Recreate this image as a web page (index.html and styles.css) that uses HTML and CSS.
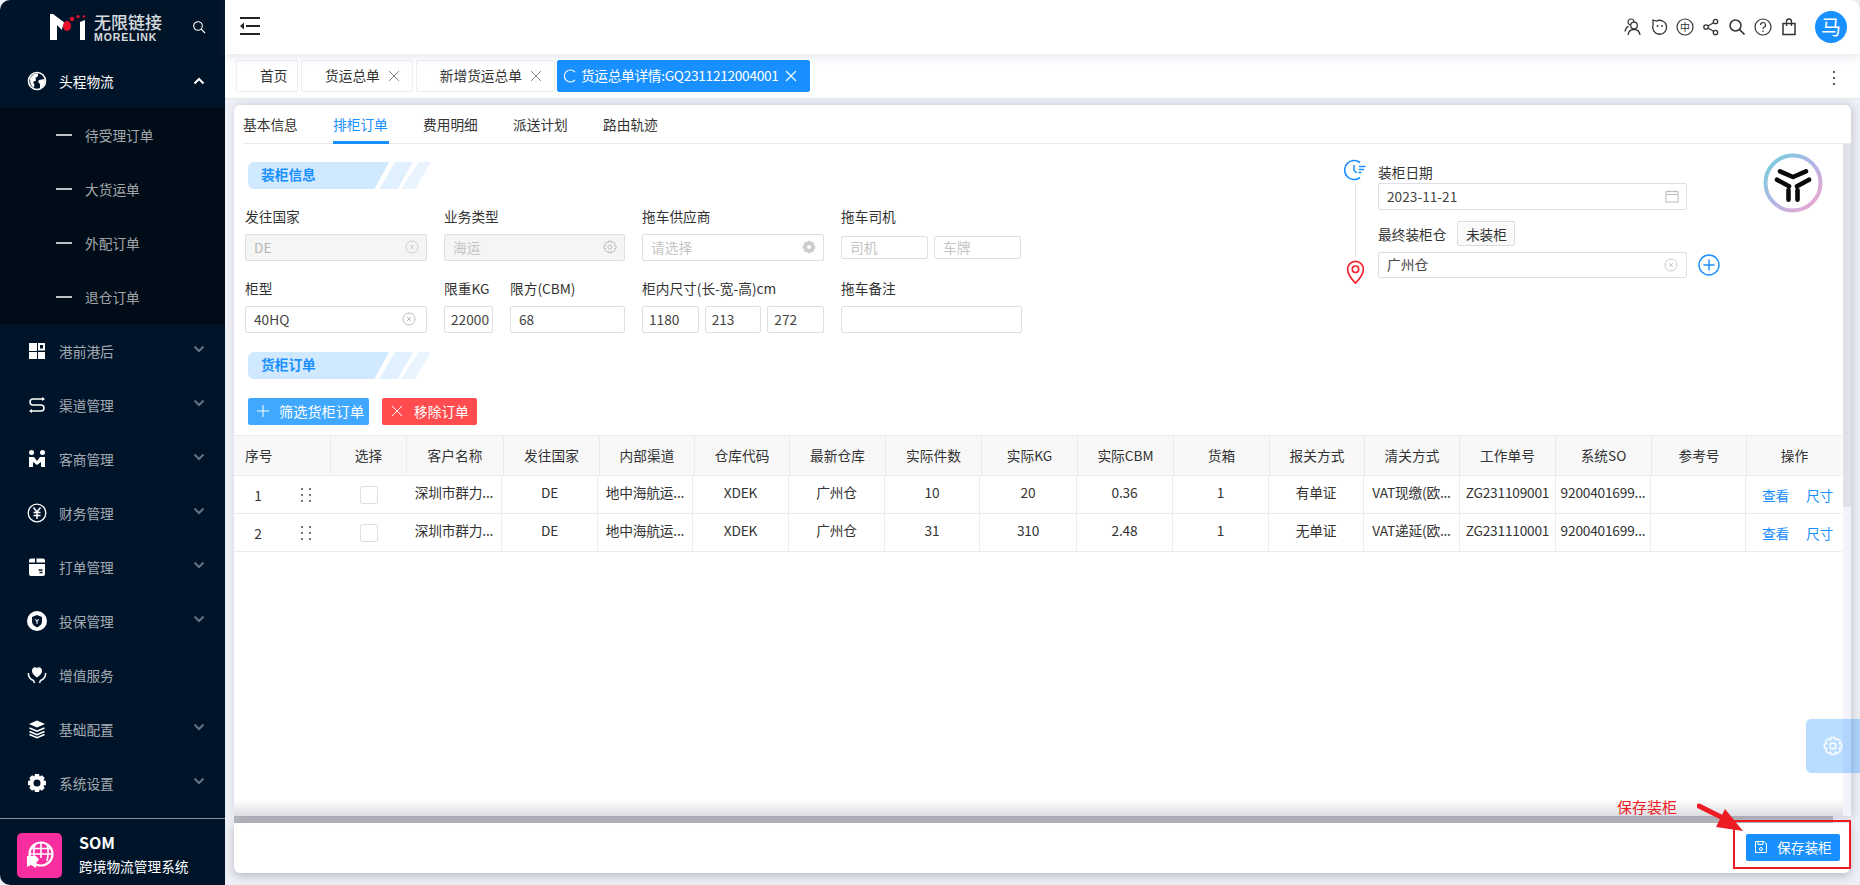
FILE: index.html
```html
<!DOCTYPE html>
<html lang="zh-CN">
<head>
<meta charset="utf-8">
<title>货运总单详情</title>
<link rel="stylesheet" href="styles.css">
</head>
<body>
<aside class="sidebar">
  <div class="brand">
    <svg class="brand-mark" viewBox="0 0 36 28" width="36" height="28"><path d="M0 1 L3 1 L15 10 C13 12 12 15 12 17 L7 12 L7 27 L0 27 Z" fill="#fff"/><ellipse cx="17" cy="13" rx="4" ry="5" fill="#e8112d"/><circle cx="22" cy="6" r="2.2" fill="#e8112d"/><circle cx="28" cy="3.5" r="1.6" fill="#e8112d"/><circle cx="34" cy="3.5" r="1.2" fill="#e8112d"/><path d="M30 9 L35 7 L35 27 L30 27 Z" fill="#fff"/></svg>
    <div class="brand-text"><div class="brand-cn">无限链接</div><div class="brand-en">MORELINK</div></div>
    <svg class="brand-search" viewBox="0 0 14 14" width="14" height="14"><circle cx="6" cy="6" r="4.3" fill="none" stroke="#fff" stroke-width="1.1"/><path d="M9.2 9.2 L13 13" stroke="#fff" stroke-width="1.2"/></svg>
  </div>
  <nav class="menu">
    <div class="menu-item active">
      <svg class="mi" viewBox="0 0 20 20"><circle cx="10" cy="10" r="8.5" fill="none" stroke="#fff" stroke-width="1.6"/><path d="M3 7 L7 3 L11 2.5 L11 5 L8.5 7 L9 9.5 L6 11 L7.5 14 L6.5 17 L3.5 13 Z M12 9 L17.5 8 L18 12 L14.5 17 L13 17 L13 13 L11 11 Z" fill="#fff"/></svg>
      <span class="ml">头程物流</span>
      <svg class="chev up" viewBox="0 0 12 8"><path d="M1.5 6.5 L6 2 L10.5 6.5" fill="none" stroke="#fff" stroke-width="2"/></svg>
    </div>
    <div class="submenu">
      <div class="sub-item"><i class="dash"></i><span>待受理订单</span></div>
      <div class="sub-item"><i class="dash"></i><span>大货运单</span></div>
      <div class="sub-item"><i class="dash"></i><span>外配订单</span></div>
      <div class="sub-item"><i class="dash"></i><span>退仓订单</span></div>
    </div>
    <div class="menu-item">
      <svg class="mi" viewBox="0 0 20 20"><path d="M2 2 H10 V10 H2 Z M2 11 H10 V18 H2 Z M11 11 H18 V18 H11 Z" fill="#fff"/><path d="M11 2 H18 V9.500 H11 Z M13 4 V7.500 H16 V4 Z" fill="#fff" fill-rule="evenodd"/></svg>
      <span class="ml">港前港后</span>
      <svg class="chev" viewBox="0 0 12 8"><path d="M1.500 1.500 L6 6 L10.500 1.500" fill="none" stroke="currentColor" stroke-width="2"/></svg>
    </div>
    <div class="menu-item">
      <svg class="mi" viewBox="0 0 20 20"><path d="M17 4 H6 A3 3 0 0 0 6 10 H14 A3 3 0 0 1 14 16 H3" fill="none" stroke="#fff" stroke-width="1.500"/><path d="M15 2 L18 4 L15 6 Z M5 14 L2 16 L5 18 Z" fill="#fff"/></svg>
      <span class="ml">渠道管理</span>
      <svg class="chev" viewBox="0 0 12 8"><path d="M1.500 1.500 L6 6 L10.500 1.500" fill="none" stroke="currentColor" stroke-width="2"/></svg>
    </div>
    <div class="menu-item">
      <svg class="mi" viewBox="0 0 20 20"><circle cx="4.500" cy="3.500" r="2.500" fill="#fff"/><circle cx="15.500" cy="3.500" r="2.500" fill="#fff"/><path d="M2 8 H7 L10 12 L13 8 H18 V18 H14 V13 L10 16 L6 13 V18 H2 Z" fill="#fff"/></svg>
      <span class="ml">客商管理</span>
      <svg class="chev" viewBox="0 0 12 8"><path d="M1.500 1.500 L6 6 L10.500 1.500" fill="none" stroke="currentColor" stroke-width="2"/></svg>
    </div>
    <div class="menu-item">
      <svg class="mi" viewBox="0 0 20 20"><circle cx="10" cy="10" r="8.800" fill="none" stroke="#fff" stroke-width="1.300"/><path d="M6.500 4.500 L10 9 L13.500 4.500 M10 9 V16 M6.500 9.500 H13.500 M6.500 12.500 H13.500" fill="none" stroke="#fff" stroke-width="1.500"/></svg>
      <span class="ml">财务管理</span>
      <svg class="chev" viewBox="0 0 12 8"><path d="M1.500 1.500 L6 6 L10.500 1.500" fill="none" stroke="currentColor" stroke-width="2"/></svg>
    </div>
    <div class="menu-item">
      <svg class="mi" viewBox="0 0 20 20"><path d="M4 1.500 H8 V5.500 H2 V3.500 A2 2 0 0 1 4 1.500 Z M9.500 1.500 H16 A2 2 0 0 1 18 3.500 V5.500 H9.500 Z M2 7 H18 V17 A2 2 0 0 1 16 19 H4 A2 2 0 0 1 2 17 Z" fill="#fff"/><path d="M11.500 13 H15.500 M12.500 15.500 H15.500" stroke="#001529" stroke-width="1.400"/></svg>
      <span class="ml">打单管理</span>
      <svg class="chev" viewBox="0 0 12 8"><path d="M1.500 1.500 L6 6 L10.500 1.500" fill="none" stroke="currentColor" stroke-width="2"/></svg>
    </div>
    <div class="menu-item">
      <svg class="mi" viewBox="0 0 20 20"><circle cx="10" cy="10" r="10" fill="#fff"/><path d="M10 4 L15 6 V10.500 C15 13 13 15 10 16.500 C7 15 5 13 5 10.500 V6 Z" fill="#001529"/><path d="M8.500 8 L10 11 L11.500 8 M10 11 V13" stroke="#fff" fill="none"/></svg>
      <span class="ml">投保管理</span>
      <svg class="chev" viewBox="0 0 12 8"><path d="M1.500 1.500 L6 6 L10.500 1.500" fill="none" stroke="currentColor" stroke-width="2"/></svg>
    </div>
    <div class="menu-item">
      <svg class="mi" viewBox="0 0 20 20"><path d="M10 12.500 C6 9.500 5 8 5 5.500 C5 3.500 6.500 2.200 8 2.200 C9 2.200 9.600 2.700 10 3.400 C10.400 2.700 11 2.200 12 2.200 C13.500 2.200 15 3.500 15 5.500 C15 8 14 9.500 10 12.500 Z" fill="#fff"/><path d="M1.500 8 C1 11.500 3 14 6.500 15.500 L7.500 18 M18.500 8 C19 11.500 17 14 13.500 15.500 L12.500 18" fill="none" stroke="#fff" stroke-width="1.500"/></svg>
      <span class="ml">增值服务</span>
    </div>
    <div class="menu-item">
      <svg class="mi" viewBox="0 0 20 20"><path d="M10 1.500 L18 5 L10 8.500 L2 5 Z" fill="#fff"/><path d="M2.500 9 L10 12.200 L17.500 9 M2.500 12.500 L10 15.700 L17.500 12.500 M2.500 15.500 L10 18.700 L17.500 15.500" fill="none" stroke="#fff" stroke-width="1.700"/></svg>
      <span class="ml">基础配置</span>
      <svg class="chev" viewBox="0 0 12 8"><path d="M1.500 1.500 L6 6 L10.500 1.500" fill="none" stroke="currentColor" stroke-width="2"/></svg>
    </div>
    <div class="menu-item">
      <svg class="mi" viewBox="0 0 20 20"><path fill-rule="evenodd" fill="#fff" d="M8 1 H12 L12.700 3.600 L14.900 2.300 L17.700 5.100 L16.400 7.300 L19 8 V12 L16.400 12.700 L17.700 14.900 L14.900 17.700 L12.700 16.400 L12 19 H8 L7.300 16.400 L5.100 17.700 L2.300 14.900 L3.600 12.700 L1 12 V8 L3.600 7.300 L2.300 5.100 L5.100 2.300 L7.300 3.600 Z M10 6.500 A3.500 3.500 0 1 0 10 13.500 A3.500 3.500 0 1 0 10 6.500 Z"/></svg>
      <span class="ml">系统设置</span>
      <svg class="chev" viewBox="0 0 12 8"><path d="M1.500 1.500 L6 6 L10.500 1.500" fill="none" stroke="currentColor" stroke-width="2"/></svg>
    </div>
  </nav>
  <div class="som">
    <div class="som-logo">
      <svg viewBox="0 0 30 30" width="30" height="30"><circle cx="16" cy="13" r="11.500" fill="none" stroke="#fff" stroke-width="2.200"/><path d="M4.500 13 H27.500 M6 7.500 H26 M16 1.500 V17 M10 3 C8.500 8 8.500 12 9.500 17 M22 3 C23.500 8 23.500 14 22 20" fill="none" stroke="#fff" stroke-width="1.600"/><path d="M2 15 H11 L14 18.500 L11 22 V27 L6 24 L2 26 Z" fill="#fff"/></svg>
    </div>
    <div class="som-text"><div class="som-title">SOM</div><div class="som-sub">跨境物流管理系统</div></div>
  </div>
</aside>

<main class="main">
  <header class="topbar">
    <svg class="fold" viewBox="0 0 20 18" width="20" height="18"><path d="M0 1 H20 M6 9 H20 M0 17 H20" stroke="#222" stroke-width="2"/><path d="M0 9 L4 5.500 V12.500 Z" fill="#222"/></svg>
    <div class="top-icons">
      <svg viewBox="0 0 18 18"><circle cx="7" cy="4" r="3" fill="none" stroke="#333" stroke-width="1.200"/><circle cx="10" cy="7.500" r="3.300" fill="#fff" stroke="#333" stroke-width="1.300"/><path d="M4 17 C4.500 13 6.500 11.500 10 11.500 C13.500 11.500 15.500 13 16 17 M1 13.500 C1.500 10.500 2.500 9 4.500 8" fill="none" stroke="#333" stroke-width="1.300"/></svg>
      <svg viewBox="0 0 18 18"><path d="M3 2 L6.500 3 A7 7 0 1 1 3 7 Z" fill="none" stroke="#333" stroke-width="1.300"/><circle cx="7.500" cy="8" r=".9" fill="#333"/><circle cx="12" cy="8" r=".9" fill="#333"/></svg>
      <svg viewBox="0 0 18 18"><circle cx="9" cy="9" r="8" fill="none" stroke="#333" stroke-width="1.200"/><text x="9" y="12.800" text-anchor="middle" class="top-glyph">中</text></svg>
      <svg viewBox="0 0 18 18"><circle cx="13.500" cy="3.500" r="2.200" fill="none" stroke="#333" stroke-width="1.300"/><circle cx="4" cy="9" r="2.200" fill="none" stroke="#333" stroke-width="1.300"/><circle cx="13.500" cy="14.500" r="2.200" fill="none" stroke="#333" stroke-width="1.300"/><path d="M6 8 L11.500 4.700 M6 10 L11.500 13.300" stroke="#333" stroke-width="1.300"/></svg>
      <svg viewBox="0 0 18 18"><circle cx="7.500" cy="7.500" r="5.500" fill="none" stroke="#333" stroke-width="1.500"/><path d="M11.500 11.500 L16.500 16.500" stroke="#333" stroke-width="1.700"/></svg>
      <svg viewBox="0 0 18 18"><circle cx="9" cy="9" r="8" fill="none" stroke="#333" stroke-width="1.200"/><path d="M6.500 7 A2.500 2.500 0 1 1 10 9.300 C9.200 9.700 9 10.200 9 11.200" fill="none" stroke="#333" stroke-width="1.200"/><circle cx="9" cy="13.300" r=".8" fill="#333"/></svg>
      <svg viewBox="0 0 18 18"><path d="M3 5.500 H15 V16.500 H3 Z" fill="none" stroke="#333" stroke-width="1.500"/><path d="M6.500 8 V3.500 A2.500 2.500 0 0 1 11.500 3.500 V8" fill="none" stroke="#333" stroke-width="1.300"/></svg>
    </div>
    <div class="avatar">马</div>
  </header>

  <div class="tabbar">
    <div class="tab tab-home">首页</div>
    <div class="tab">货运总单<svg class="x" viewBox="0 0 12 12"><path d="M1 1 L11 11 M11 1 L1 11" stroke="#888" stroke-width="1"/></svg></div>
    <div class="tab">新增货运总单<svg class="x" viewBox="0 0 12 12"><path d="M1 1 L11 11 M11 1 L1 11" stroke="#888" stroke-width="1"/></svg></div>
    <div class="tab tab-active">
      <svg class="spin" viewBox="0 0 14 14"><path d="M12 3.200 A6 6 0 1 0 12 10.800" fill="none" stroke="#fff" stroke-width="1.200"/></svg>
      <span class="tab-title">货运总单详情:GQ2311212004001</span>
      <svg class="x x-active" viewBox="0 0 12 12"><path d="M1 1 L11 11 M11 1 L1 11" stroke="#fff" stroke-width="1.100"/></svg>
    </div>
    <svg class="kebab" viewBox="0 0 4 16" width="4" height="16"><circle cx="2" cy="2" r="1.100" fill="#333"/><circle cx="2" cy="8" r="1.100" fill="#333"/><circle cx="2" cy="14" r="1.100" fill="#333"/></svg>
  </div>

  <section class="card">
    <div class="card-tabs">
      <div class="ctab">基本信息</div>
      <div class="ctab on">排柜订单</div>
      <div class="ctab">费用明细</div>
      <div class="ctab">派送计划</div>
      <div class="ctab">路由轨迹</div>
    </div>
    <div class="card-body">
      <div class="card-main">
        <div class="upper">
          <div class="form">
            <div class="sec">
              <svg viewBox="0 0 183 27" width="183" height="27"><path d="M6 0 H141 L126.500 27 H6 A6 6 0 0 1 0 21 V6 A6 6 0 0 1 6 0 Z" fill="#d1e9ff"/><path d="M147 0 H165 L149.500 27 H131.500 Z" fill="#e0f0ff"/><path d="M171 0 H183 L167 27 H153 Z" fill="#e9f4ff"/></svg>
              <span>装柜信息</span>
            </div>
            <div class="frow">
              <div class="f w182"><label>发往国家</label><div class="inp dis">DE<svg class="clear" viewBox="0 0 14 14"><circle cx="7" cy="7" r="6" fill="none" stroke="#ccc"/><path d="M5 5 L9 9 M9 5 L5 9" stroke="#ccc"/></svg></div></div>
              <div class="f w181"><label>业务类型</label><div class="inp dis ph">海运<svg class="clear" viewBox="0 0 20 20"><path fill="none" stroke="#bbb" stroke-width="1.400" d="M8 1.500 H12 L12.600 4 L14.800 2.800 L17.500 5.500 L16.200 7.600 L18.700 8.300 V11.700 L16.200 12.400 L17.500 14.500 L14.800 17.200 L12.600 16 L12 18.500 H8 L7.400 16 L5.200 17.200 L2.500 14.500 L3.800 12.400 L1.300 11.700 V8.300 L3.800 7.600 L2.500 5.500 L5.200 2.800 L7.400 4 Z"/><circle cx="10" cy="10" r="3" fill="none" stroke="#bbb" stroke-width="1.400"/></svg></div></div>
              <div class="f w182"><label>拖车供应商</label><div class="inp ph">请选择<svg class="clear" viewBox="0 0 20 20"><path fill-rule="evenodd" fill="#ccc" d="M8 1 H12 L12.700 3.600 L14.900 2.300 L17.700 5.100 L16.400 7.300 L19 8 V12 L16.400 12.700 L17.700 14.900 L14.900 17.700 L12.700 16.400 L12 19 H8 L7.300 16.400 L5.100 17.700 L2.300 14.900 L3.600 12.700 L1 12 V8 L3.600 7.300 L2.300 5.100 L5.100 2.300 L7.300 3.600 Z M10 7 A3 3 0 1 0 10 13 A3 3 0 1 0 10 7 Z"/></svg></div></div>
              <div class="f w181"><label>拖车司机</label><div class="pair"><div class="inp sm ph">司机</div><div class="inp sm ph">车牌</div></div></div>
            </div>
            <div class="frow">
              <div class="f w182"><label>柜型</label><div class="inp">40HQ<svg class="clear c2" viewBox="0 0 14 14"><circle cx="7" cy="7" r="6" fill="none" stroke="#bbb"/><path d="M5 5 L9 9 M9 5 L5 9" stroke="#bbb"/></svg></div></div>
              <div class="f w49"><label>限重KG</label><div class="inp tight">22000</div></div>
              <div class="f w115"><label>限方(CBM)</label><div class="inp">68</div></div>
              <div class="f w182"><label>柜内尺寸(长-宽-高)cm</label><div class="triple"><div class="inp tight2">1180</div><div class="inp tight2">213</div><div class="inp tight2">272</div></div></div>
              <div class="f w181"><label>拖车备注</label><div class="inp"></div></div>
            </div>
          </div>
          <div class="panel">
            <div class="timeline">
              <svg class="clock" viewBox="0 0 22 22" width="22" height="22"><path d="M16 3.500 A9.500 9.500 0 1 0 16 18.500" fill="none" stroke="#1890ff" stroke-width="1.600"/><path d="M10 6 V11.500 L13 14" fill="none" stroke="#1890ff" stroke-width="1.500"/><path d="M15 7.500 H21.500 M15 10.500 H20 M14.500 13.500 H17.500" stroke="#1890ff" stroke-width="1.300"/></svg>
              <i class="tl-line"></i>
              <svg class="pin" viewBox="0 0 20 26" width="20" height="26"><path d="M10 25 C4 19 1.500 15 1.500 10 A8.500 8.500 0 0 1 18.500 10 C18.500 15 16 19 10 25 Z" fill="none" stroke="#f5222d" stroke-width="1.800"/><circle cx="10" cy="10" r="3.500" fill="none" stroke="#f5222d" stroke-width="1.800"/></svg>
            </div>
            <div class="pfields">
              <label class="plabel">装柜日期</label>
              <div class="inp pinp">2023-11-21<svg class="clear cal" viewBox="0 0 14 14"><rect x="1" y="2.500" width="12" height="10.500" fill="none" stroke="#bbb"/><path d="M1 5.500 H13 M4 1 V3.500 M10 1 V3.500" stroke="#bbb"/></svg></div>
              <div class="prow"><label>最终装柜仓</label><div class="badge">未装柜</div></div>
              <div class="pline">
                <div class="inp pinp">广州仓<svg class="clear c3" viewBox="0 0 14 14"><circle cx="7" cy="7" r="6" fill="none" stroke="#ccc"/><path d="M5 5 L9 9 M9 5 L5 9" stroke="#ccc"/></svg></div>
                <svg class="plus" viewBox="0 0 22 22" width="22" height="22"><circle cx="11" cy="11" r="10" fill="none" stroke="#1890ff" stroke-width="1.400"/><path d="M5.500 11 H16.500 M11 5.500 V16.500" stroke="#1890ff" stroke-width="1.400"/></svg>
              </div>
            </div>
            <svg class="ylogo" viewBox="0 0 60 60" width="60" height="60"><defs><linearGradient id="ring" x1="0" y1="0" x2="1" y2="1"><stop offset="0" stop-color="#6fd0dc"/><stop offset=".55" stop-color="#b9b4e6"/><stop offset="1" stop-color="#f3a4c6"/></linearGradient></defs><circle cx="30" cy="30" r="27.500" fill="none" stroke="url(#ring)" stroke-width="4"/><path d="M17 18.300 L30 24 L43 18.300 M14 26.700 L26 33.300 M46 26.700 L34 33.300 M25.500 37 V46.700 M34.500 37 V46.700" fill="none" stroke="#0a0a0a" stroke-width="4.600" stroke-linecap="round" stroke-linejoin="round"/></svg>
          </div>
        </div>
        <div class="sec sec2">
          <svg viewBox="0 0 183 27" width="183" height="27"><path d="M6 0 H141 L126.500 27 H6 A6 6 0 0 1 0 21 V6 A6 6 0 0 1 6 0 Z" fill="#d1e9ff"/><path d="M147 0 H165 L149.500 27 H131.500 Z" fill="#e0f0ff"/><path d="M171 0 H183 L167 27 H153 Z" fill="#e9f4ff"/></svg>
          <span>货柜订单</span>
        </div>
        <div class="btns">
          <button class="btn btn-blue"><svg viewBox="0 0 12 12" width="12" height="12"><path d="M6 0 V12 M0 6 H12" stroke="#fff" stroke-width="1"/></svg>筛选货柜订单</button>
          <button class="btn btn-red"><svg viewBox="0 0 12 12" width="12" height="12"><path d="M1 1 L11 11 M11 1 L1 11" stroke="#fff" stroke-width="1"/></svg>移除订单</button>
        </div>
        <div class="table">
          <div class="thead">
            <div class="th left">序号</div><div class="th">选择</div><div class="th">客户名称</div><div class="th">发往国家</div><div class="th">内部渠道</div><div class="th">仓库代码</div><div class="th">最新仓库</div><div class="th">实际件数</div><div class="th">实际KG</div><div class="th">实际CBM</div><div class="th">货箱</div><div class="th">报关方式</div><div class="th">清关方式</div><div class="th">工作单号</div><div class="th">系统SO</div><div class="th">参考号</div><div class="th">操作</div>
          </div>
          <div class="trow">
            <div class="td first"><span class="num">1</span><svg class="drag" viewBox="0 0 12 16" width="12" height="16"><g fill="#444"><circle cx="2" cy="2" r="1"/><circle cx="10" cy="2" r="1"/><circle cx="2" cy="8" r="1"/><circle cx="10" cy="8" r="1"/><circle cx="2" cy="14" r="1"/><circle cx="10" cy="14" r="1"/></g></svg></div>
            <div class="td check"><i class="box"></i></div>
            <div class="td">深圳市群力...</div><div class="td">DE</div><div class="td">地中海航运...</div><div class="td">XDEK</div><div class="td">广州仓</div><div class="td">10</div><div class="td">20</div><div class="td">0.36</div><div class="td">1</div><div class="td">有单证</div><div class="td">VAT现缴(欧...</div><div class="td">ZG231109001</div><div class="td">9200401699...</div><div class="td"></div>
            <div class="td ops"><a>查看</a><a>尺寸</a></div>
          </div>
          <div class="trow">
            <div class="td first"><span class="num">2</span><svg class="drag" viewBox="0 0 12 16" width="12" height="16"><g fill="#444"><circle cx="2" cy="2" r="1"/><circle cx="10" cy="2" r="1"/><circle cx="2" cy="8" r="1"/><circle cx="10" cy="8" r="1"/><circle cx="2" cy="14" r="1"/><circle cx="10" cy="14" r="1"/></g></svg></div>
            <div class="td check"><i class="box"></i></div>
            <div class="td">深圳市群力...</div><div class="td">DE</div><div class="td">地中海航运...</div><div class="td">XDEK</div><div class="td">广州仓</div><div class="td">31</div><div class="td">310</div><div class="td">2.48</div><div class="td">1</div><div class="td">无单证</div><div class="td">VAT递延(欧...</div><div class="td">ZG231110001</div><div class="td">9200401699...</div><div class="td"></div>
            <div class="td ops"><a>查看</a><a>尺寸</a></div>
          </div>
        </div>
        <div class="fade"></div>
      </div>
      <div class="vscroll"><i></i></div>
    </div>
  </section>

  <div class="greybar"></div>
  <footer class="savebar">
    <button class="btn btn-save"><svg viewBox="0 0 14 14" width="14" height="14"><path d="M1.500 1.500 H10 L12.500 4 V12.500 H1.500 Z" fill="none" stroke="#fff"/><path d="M4 1.500 V4.500 H9 V1.500" fill="none" stroke="#fff"/><circle cx="7" cy="9" r="1.500" fill="none" stroke="#fff"/></svg>保存装柜</button>
  </footer>
</main>

<div class="float-gear"><svg viewBox="0 0 20 20" width="20" height="20"><path fill="none" stroke="#fff" stroke-width="1.300" d="M8 1.500 H12 L12.600 4 L14.800 2.800 L17.500 5.500 L16.200 7.600 L18.700 8.300 V11.700 L16.200 12.400 L17.500 14.500 L14.800 17.200 L12.600 16 L12 18.500 H8 L7.400 16 L5.200 17.200 L2.500 14.500 L3.800 12.400 L1.300 11.700 V8.300 L3.800 7.600 L2.500 5.500 L5.200 2.800 L7.400 4 Z"/><circle cx="10" cy="10" r="3" fill="none" stroke="#fff" stroke-width="1.300"/></svg></div>
<div class="note">保存装柜</div>
<svg class="note-arrow" viewBox="0 0 48 30" width="48" height="30"><path d="M2 3 L30 17" stroke="#ed1c24" stroke-width="5" stroke-linecap="round"/><path d="M28 6 L46 28 L19 24 Z" fill="#ed1c24"/></svg>
<div class="note-box"></div>
</body>
</html>
```
FILE: styles.css
```css
* { box-sizing: border-box; }
html, body { margin: 0; padding: 0; height: 885px; overflow: hidden; }
body {
  display: flex;
  width: 1860px;
  background: #eef0f7;
  font-family: "Noto Sans CJK SC", "Noto Sans", sans-serif;
  font-size: 13.7px;
  line-height: 20px;
  color: #333;
}
label { display: block; color: #333; }

/* sidebar */
.sidebar {
  width: 225px;
  height: 885px;
  flex: none;
  display: flex;
  flex-direction: column;
  background: #001429;
  border-radius: 10px 0 0 10px;
  overflow: hidden;
  color: rgba(255, 255, 255, .65);
}
.brand { height: 54px; display: flex; align-items: center; padding-left: 50px; }
.brand-mark { flex: none; }
.brand-text { margin-left: 8px; color: #fff; opacity: .85; width: 70px; }
.brand-cn { font-size: 17px; line-height: 19px; font-weight: 500; }
.brand-en { font-size: 10.500px; line-height: 11px; margin-top: 1px; font-weight: 700; letter-spacing: .9px; font-family: "Liberation Sans", sans-serif; }
.brand-search { margin-left: 28px; flex: none; }
.menu { flex: 1; }
.menu-item { height: 54px; display: flex; align-items: center; padding: 0 20px 0 27px; }
.mi { width: 20px; height: 20px; flex: none; margin-right: 12px; }
.ml { flex: 1; }
.menu-item.active { color: #fff; }
.chev { width: 12px; height: 8px; flex: none; color: rgba(255, 255, 255, .4); margin-top: -4px; }
.chev.up { margin-top: 0; }
.submenu { background: #000c17; height: 216px; }
.sub-item { height: 54px; display: flex; align-items: center; padding-left: 56px; }
.dash { width: 16px; height: 2px; background: rgba(255, 255, 255, .75); margin-right: 13px; }
.som { height: 67px; border-top: 1px solid #8c8f94; display: flex; padding: 14px 0 0 17px; }
.som-logo { width: 45px; height: 45px; background: #f72e9f; border-radius: 5px; display: flex; align-items: center; justify-content: center; }
.som-text { margin-left: 17px; color: #fff; margin-top: -3px; }
.som-title { font-size: 16px; font-weight: 700; line-height: 24px; }
.som-sub { line-height: 24px; }

/* main */
.main { flex: 1; display: flex; flex-direction: column; min-width: 0; height: 885px; }
.topbar {
  height: 54px;
  flex: none;
  background: #fff;
  display: flex;
  align-items: center;
  padding: 0 13px 0 15px;
  border-radius: 0 10px 0 0;
  box-shadow: 0 2px 10px rgba(90, 95, 150, .18);
  position: relative;
}
.fold { margin-top: -3px; }
.top-icons { margin-left: auto; display: flex; gap: 8px; }
.top-icons svg { width: 18px; height: 18px; }
.top-glyph { font-size: 10px; fill: #333; }
.avatar {
  width: 32px; height: 32px; border-radius: 50%;
  background: #1890ff; color: #fff; font-size: 20px;
  display: flex; align-items: center; justify-content: center;
  margin-left: 17px;
}
.tabbar {
  height: 45px;
  flex: none;
  background: #fff;
  border-bottom: 1px solid #e6e8f0;
  display: flex;
  align-items: flex-start;
  gap: 3px;
  padding: 6px 0 0 11px;
}
.tab {
  height: 32px;
  display: flex;
  align-items: center;
  border: 1px solid #eee;
  border-radius: 2px;
  padding: 0 12px 2px 23px;
  color: #333;
  background: #fff;
  white-space: nowrap;
}
.tab-home { width: 62px; padding: 0 0 2px 23px; }
.x { width: 12px; height: 12px; margin-left: 8px; margin-top: 2px; }
.tab-active { background: #1890ff; border-color: #1890ff; color: #fff; padding: 0 12px 2px 5px; margin-left: -1px; }
.tab-title { letter-spacing: -.3px; }
.spin { width: 14px; height: 14px; margin: 2px 4px 0 0; }
.x-active { margin-left: 6px; }
.kebab { margin: 10px 24px 0 auto; }

.card {
  height: 711px;
  flex: none;
  margin: 6px 9px 0 9px;
  background: #fff;
  border-radius: 6px 6px 0 0;
  box-shadow: 2px 0 8px rgba(60, 60, 80, .22);
  display: flex;
  flex-direction: column;
  position: relative;
}
.card-tabs { height: 39px; flex: none; border-bottom: 1px solid #eaeaea; margin-left: 9px; display: flex; gap: 34px; }
.ctab { width: 56px; height: 39px; padding-top: 9px; color: #333; white-space: nowrap; }
.ctab.on { color: #1890ff; border-bottom: 3px solid #1890ff; }
.card-body { flex: 1; display: flex; min-height: 0; }
.card-main { flex: 1; display: flex; flex-direction: column; min-width: 0; }
.vscroll { width: 8px; background: #f3f3fc; flex: none; }
.vscroll i { display: block; height: 363px; background: #e0e0e8; }

.upper { display: flex; height: 189px; flex: none; }
.form { width: 788px; flex: none; padding-left: 11px; }
.sec { display: grid; width: 183px; height: 27px; margin: 18px 0 0 3px; }
.sec svg, .sec span { grid-area: 1 / 1; }
.sec span { color: #1890ff; font-weight: 700; padding: 2px 0 0 13px; line-height: 20px; }
.frow { display: flex; gap: 17px; margin-top: 18px; }
.f label { line-height: 20px; margin: -1px 0 8px; white-space: nowrap; }
.w182 { width: 182px; }
.w181 { width: 181px; }
.w49 { width: 49px; }
.w115 { width: 115px; }
.inp {
  height: 27px;
  border: 1px solid #dcdfe6;
  border-radius: 2px;
  background: #fff;
  padding: 0 8px 1px;
  line-height: 25px;
  display: flex;
  align-items: center;
  color: #444;
}
.dis { background: #f5f5f5; color: #b5b5b5; }
.ph { color: #c4c4c4; }
.clear { width: 14px; height: 14px; margin-left: auto; flex: none; margin-right: -1px; }
.c2 { margin-right: 2px; }
.pair { display: flex; gap: 6px; padding-top: 2px; }
.inp.sm { height: 23px; width: 87px; }
.inp.tight { padding: 0 6px 1px; }
.triple { display: flex; gap: 6px; }
.inp.tight2 { flex: 1; padding: 0 6px 1px; }

.panel { display: flex; margin-left: 322px; flex: none; }
.timeline { width: 22px; display: flex; flex-direction: column; align-items: center; padding-top: 15px; height: 140px; }
.clock { flex: none; }
.tl-line { width: 1px; flex: 1; background: #e4e4e4; margin: 3px 0; }
.pin { flex: none; width: 19px; height: 24px; }
.pfields { margin-left: 12px; padding-top: 19px; width: 342px; }
.plabel { line-height: 20px; margin-top: -1px; padding-bottom: 1px; }
.inp.pinp { width: 309px; }
.prow { display: flex; align-items: center; margin-top: 11px; height: 25px; }
.badge {
  width: 58px; height: 25px; margin-left: 11px;
  border: 1px solid #ddd; border-radius: 2px; background: #fafafa;
  display: flex; align-items: center; justify-content: center;
}
.pline { display: flex; align-items: center; gap: 11px; margin-top: 6px; }
.pline .inp { height: 26px; }
.c3 { margin-right: 0; }
.ylogo { margin: 9px 0 0 43px; flex: none; }

.sec2 { margin: 19px 0 0 14px; flex: none; }
.btns { display: flex; gap: 13px; margin: 19px 0 0 14px; flex: none; }
.btn {
  height: 27px; border: 0; border-radius: 2px; color: #fff;
  font: inherit; display: flex; align-items: center; padding: 0 0 1px 9px;
}
.btn-blue { width: 121px; background: #40a9ff; font-size: 14.200px; }
.btn-blue svg { margin-right: 10px; }
.btn-red { width: 95px; background: #ff4d4f; }
.btn-red svg { margin-right: 11px; }

.table { margin-top: 10px; width: 1608px; flex: none; }
.thead, .trow { display: grid; }
.thead {
  grid-template-columns: 97px 76px 97px 96px 95px 95px 96px 96px 96px 96px 96px 95px 95px 96px 96px 95px 95px;
  height: 41px;
  background: #f8f8f9;
  border-top: 1px solid #ebecf3;
  border-bottom: 1px solid #ebecf3;
}
.th { border-right: 1px solid #ebecf3; display: flex; align-items: center; justify-content: center; color: #333; padding-bottom: 2px; }
.th:last-child { border-right: 0; }
.th.left { justify-content: flex-start; padding-left: 11px; }
.trow {
  grid-template-columns: 97px 76px 95px 96px 95px 96px 96px 95px 97px 96px 96px 95px 96px 96px 95px 95px 96px;
  height: 38px;
  border-bottom: 1px solid #ebecf3;
}
.td {
  border-right: 1px solid #ebecf3;
  display: flex; align-items: center; justify-content: center;
  padding-bottom: 5px;
  white-space: nowrap; overflow: hidden;
  color: #333;
  letter-spacing: -.2px;
}
.td.first { border-right: 0; justify-content: flex-start; padding: 0; }
.num { width: 48px; text-align: center; padding-top: 1px; }
.drag { margin-left: 18px; }
.td.check { border-right: 0; padding: 0; }
.box { width: 18px; height: 18px; border: 1px solid #dcdfe6; border-radius: 2px; display: block; }
.td.ops { border-right: 0; gap: 17px; justify-content: flex-start; padding: 1px 0 0 16px; color: #1890ff; }
.fade { flex: 1; background: linear-gradient(to bottom, #fff 0, #fff calc(100% - 16px), #dcdce2 100%); }

.greybar { height: 7px; flex: none; width: 1599px; margin-left: 9px; background: #b9b9c1; }
.savebar {
  height: 50px; flex: none; width: 1616px; margin-left: 9px;
  background: #fff; border-radius: 0 0 6px 6px;
  box-shadow: 0 3px 10px rgba(60, 60, 70, .3);
  display: flex; justify-content: flex-end; align-items: flex-start;
  padding: 11px 10px 0 0;
}
.btn-save { width: 94px; background: #1890ff; padding-left: 8px; }
.btn-save svg { margin-right: 9px; }

/* overlays */
.float-gear {
  position: absolute; left: 1806px; top: 719px; width: 54px; height: 54px;
  background: rgba(24, 144, 255, .3); border-radius: 5px 0 0 5px;
  display: flex; align-items: center; padding-left: 17px;
}
.note { position: absolute; left: 1617px; top: 797px; color: #ed1c24; font-size: 15px; }
.note-arrow { position: absolute; left: 1697px; top: 803px; }
.note-box { position: absolute; left: 1733px; top: 820px; width: 118px; height: 49px; border: 2px solid #ed1c24; }
```
